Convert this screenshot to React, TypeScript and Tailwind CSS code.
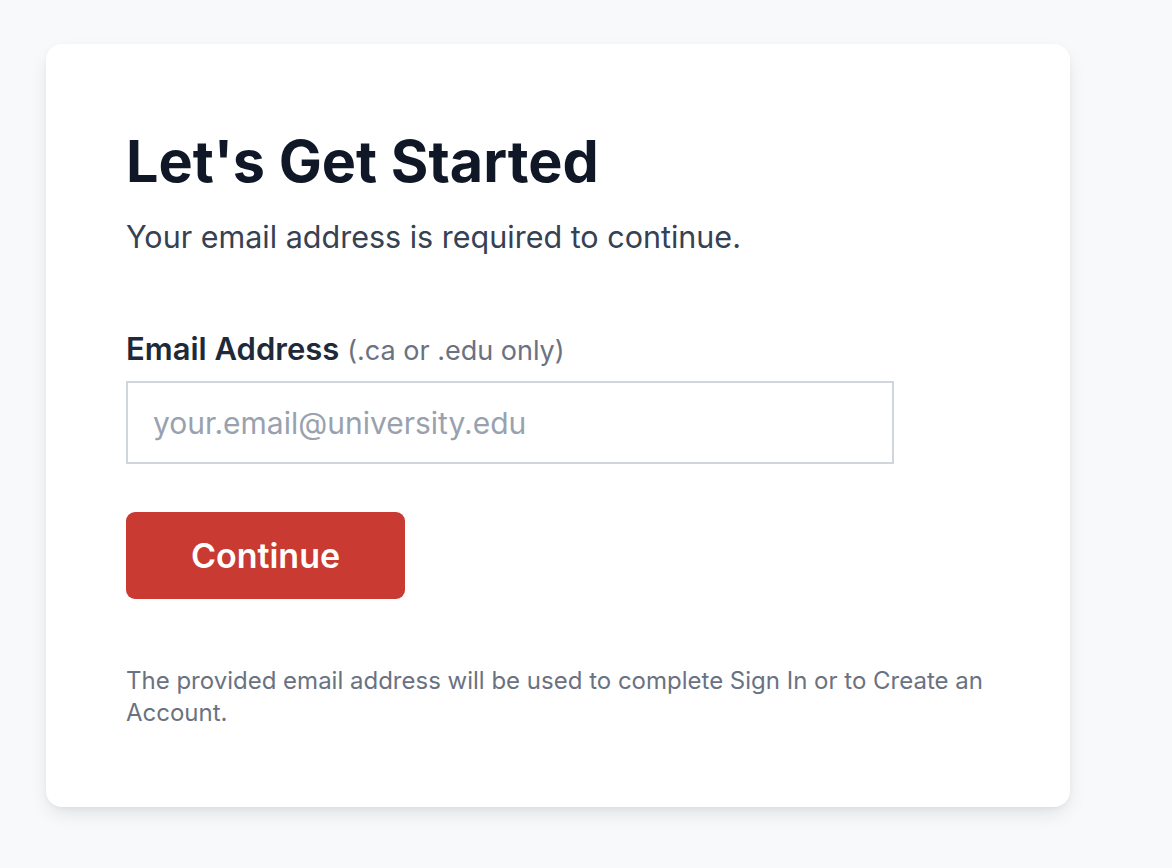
import { useState } from "react";

export default function App() {
  const [email, setEmail] = useState("");

  return (
    <div className="min-h-screen bg-[#f8f9fb] pt-[44px] pl-[46px] font-['Inter',sans-serif]">
      <div className="w-[1024px] rounded-[16px] bg-white px-[80px] pt-[88px] pb-[78px] shadow-[0_8px_20px_-4px_rgba(0,0,0,0.12),0_2px_6px_-2px_rgba(0,0,0,0.06)]">
        <h1 className="text-[57.5px] leading-[58px] font-bold text-gray-900">
          Let's Get Started
        </h1>
        <p className="mt-[27px] text-[30.5px] leading-[40px] text-gray-700">
          Your email address is required to continue.
        </p>

        <div className="mt-[74px]">
          <label className="block text-[31px] leading-[36px] font-semibold text-gray-800">
            Email Address{" "}
            <span className="text-[27px] font-normal text-gray-500">
              (.ca or .edu only)
            </span>
          </label>
          <input
            type="email"
            value={email}
            onChange={(e) => setEmail(e.target.value)}
            placeholder="your.email@university.edu"
            className="mt-[12px] block h-[83px] w-[768px] border-2 border-gray-300 px-[25px] text-[30px] text-gray-900 placeholder:text-gray-400 outline-none"
          />
        </div>

        <button className="mt-[48px] h-[87px] w-[279px] rounded-[9px] bg-[#c93a33] text-[34px] font-semibold text-white">
          Continue
        </button>

        <p className="mt-[66px] text-[24px] leading-[32px] text-gray-500">
          The provided email address will be used to complete Sign In or to
          Create an Account.
        </p>
      </div>
    </div>
  );
}
